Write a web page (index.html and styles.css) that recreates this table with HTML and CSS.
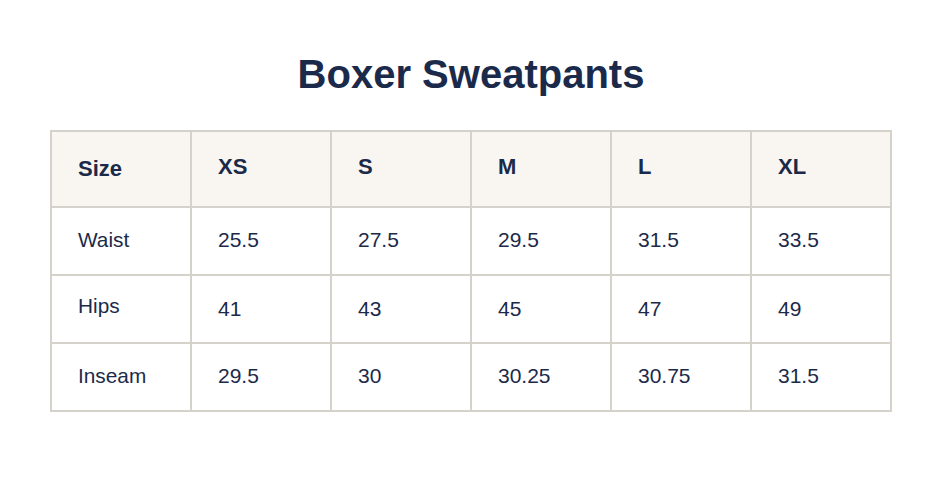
FILE: index.html
```html
<!DOCTYPE html>
<html lang="en">
<head>
<meta charset="utf-8">
<title>Boxer Sweatpants</title>
<link rel="stylesheet" href="styles.css">
</head>
<body>
<main class="page">
  <h1 class="title">Boxer Sweatpants</h1>
  <table class="size-table">
    <thead>
      <tr>
        <th class="label">Size</th>
        <th>XS</th>
        <th>S</th>
        <th>M</th>
        <th>L</th>
        <th>XL</th>
      </tr>
    </thead>
    <tbody>
      <tr>
        <td class="label">Waist</td>
        <td>25.5</td>
        <td>27.5</td>
        <td>29.5</td>
        <td>31.5</td>
        <td>33.5</td>
      </tr>
      <tr class="row-shift">
        <td class="label">Hips</td>
        <td>41</td>
        <td>43</td>
        <td>45</td>
        <td>47</td>
        <td>49</td>
      </tr>
      <tr>
        <td class="label">Inseam</td>
        <td>29.5</td>
        <td>30</td>
        <td>30.25</td>
        <td>30.75</td>
        <td>31.5</td>
      </tr>
    </tbody>
  </table>
</main>
</body>
</html>
```

FILE: styles.css
```css
html, body {
  margin: 0;
  padding: 0;
  background: #ffffff;
}

body {
  font-family: "Liberation Sans", Arial, sans-serif;
  color: #1b2a4a;
}

.page {
  display: flex;
  flex-direction: column;
  align-items: flex-start;
  padding: 51px 48px 0 50px;
}

.title {
  align-self: stretch;
  margin: 0 0 33px;
  text-align: center;
  font-size: 40px;
  line-height: 46px;
  font-weight: 700;
  color: #1b2a4a;
}

.size-table {
  width: 842px;
  table-layout: fixed;
  border-collapse: separate;
  border-spacing: 0;
  border-top: 2px solid #d5d2cc;
  border-left: 2px solid #d5d2cc;
}

.size-table th,
.size-table td {
  border-right: 2px solid #d5d2cc;
  border-bottom: 2px solid #d5d2cc;
  text-align: left;
  vertical-align: top;
  line-height: 24px;
  white-space: nowrap;
}

.size-table th {
  background: #f9f6f1;
  font-size: 22px;
  font-weight: 700;
  padding: 23px 26px 27px;
}

.size-table td {
  font-size: 21px;
  font-weight: 400;
  padding: 20px 26px 22px;
}

.size-table td.label {
  font-size: 20.8px;
}

.size-table th.label {
  padding-top: 25px;
  padding-bottom: 25px;
}

.row-shift td {
  padding-top: 21px;
  padding-bottom: 21px;
}

.row-shift td.label {
  padding-top: 18px;
  padding-bottom: 24px;
}
```
